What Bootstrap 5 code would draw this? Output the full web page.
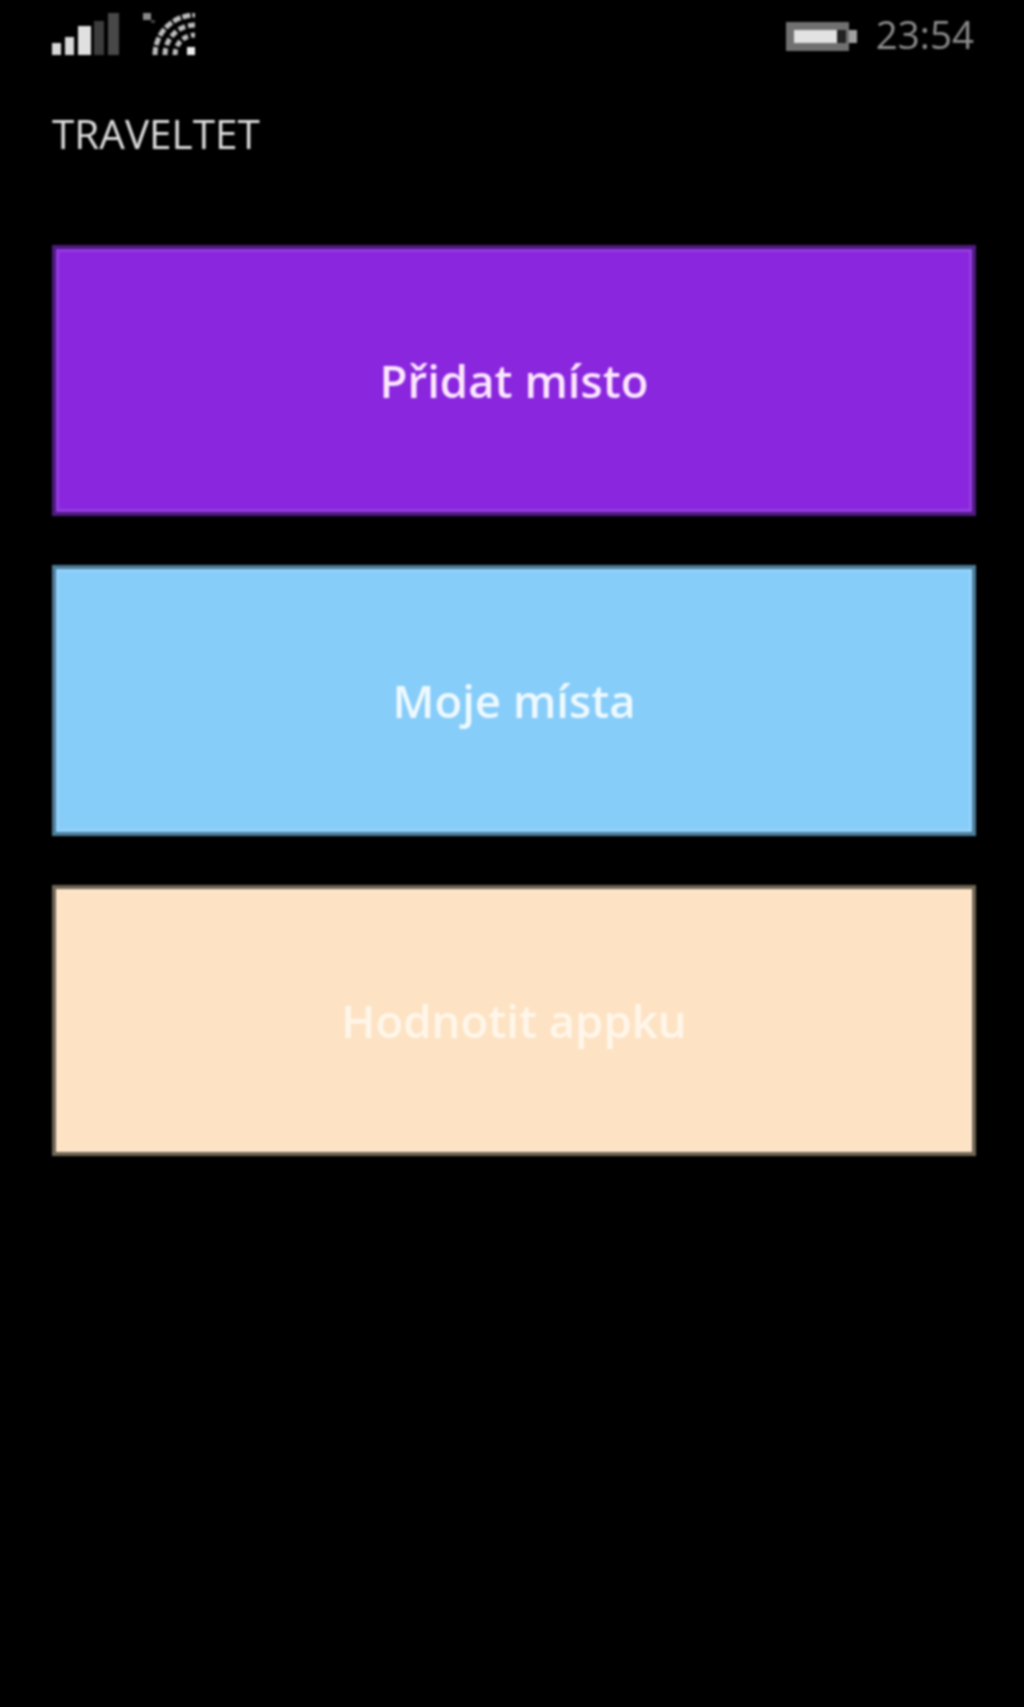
<!DOCTYPE html>
<html lang="en">
<head>
    <meta charset="UTF-8">
    <meta name="viewport" content="width=device-width, initial-scale=1.0">
    <title>Traveltet</title>
    <link href="https://cdn.jsdelivr.net/npm/bootstrap@5.3.0/dist/css/bootstrap.min.css" rel="stylesheet">
    <style>
        html, body { background: #000; }
        .phone-screen {
            min-height: 1707px;
            padding: 0 48px 0 52px;
            font-family: "Open Sans", "Liberation Sans", sans-serif;
            filter: blur(1px);
        }
        .status-bar { height: 68px; }
        .status-time { font-size: 38.5px; line-height: 1; color: #8c8c8c; margin-left: 18px; margin-right: 2px; }
        .app-title { font-size: 40.5px; line-height: 50px; color: #dcdcdc; margin: 41px 0 0; font-weight: 400; }
        .menu-list { margin-top: 86px; gap: 49px; }
        .menu-btn {
            height: 271px;
            border-width: 4px;
            border-style: solid;
            border-radius: 0;
            color: #fff;
            font-size: 45.5px;
            font-weight: 600;
            box-shadow: inset 0 0 0 3px rgba(255, 255, 255, .1);
        }
        .menu-btn:hover { color: #fff; }
        .menu-violet, .menu-violet:hover { background: #8a26dd; border-color: #4f1a80; color: #fbe6ff; }
        .menu-sky, .menu-sky:hover { background: #87cdfa; border-color: #4d7c98; color: #eef9ff; }
        .menu-bisque, .menu-bisque:hover { background: #fde3c4; border-color: #6f6555; color: #fff6ea; }
    </style>
</head>
<body>
    <div class="phone-screen">
        <div class="status-bar d-flex align-items-center">
            <!-- signal -->
            <svg width="67" height="42" viewBox="0 0 67 42" class="flex-shrink-0">
                <rect x="0" y="30" width="9" height="12" fill="#d8d8d8"/>
                <rect x="13" y="24" width="9" height="18" fill="#d8d8d8"/>
                <rect x="26" y="13" width="13" height="29" fill="#e0e0e0"/>
                <rect x="42" y="8" width="10" height="34" fill="#3c3c3c"/>
                <rect x="56" y="0" width="11" height="42" fill="#484848"/>
            </svg>
            <!-- wifi -->
            <svg width="53" height="42" viewBox="0 0 53 42" class="flex-shrink-0" style="margin-left:24px">
                <rect x="0" y="0" width="8" height="7" fill="#8a8a8a"/>
                <rect x="8" y="7" width="4" height="3" fill="#444"/>
                <g fill="none" stroke="#bdbdbd" stroke-width="5">
                    <path d="M12 42A40 40 0 0 1 52 2" stroke-dasharray="8 2"/>
                    <path d="M22 42A30 30 0 0 1 52 12" stroke-dasharray="7 3"/>
                    <path d="M32 42A20 20 0 0 1 52 22" stroke-dasharray="6 3"/>
                </g>
                <rect x="44" y="34" width="8" height="8" fill="#eee"/>
            </svg>
            <!-- battery -->
            <svg width="72" height="29" viewBox="0 0 72 29" class="ms-auto mt-1 flex-shrink-0">
                <rect x="0" y="0" width="63" height="29" fill="#707070"/>
                <rect x="8" y="8" width="43" height="13" fill="#e2e2e2"/>
                <rect x="51" y="8" width="9" height="13" fill="#222"/>
                <rect x="63" y="8" width="8" height="13" fill="#a0a0a0"/>
            </svg>
            <span class="status-time">23:54</span>
        </div>

        <h1 class="app-title">TRAVELTET</h1>

        <div class="menu-list d-flex flex-column">
            <button type="button" class="btn menu-btn menu-violet">Přidat místo</button>
            <button type="button" class="btn menu-btn menu-sky">Moje místa</button>
            <button type="button" class="btn menu-btn menu-bisque">Hodnotit appku</button>
        </div>
    </div>

    <script src="https://cdn.jsdelivr.net/npm/bootstrap@5.3.0/dist/js/bootstrap.bundle.min.js"></script>
</body>
</html>
